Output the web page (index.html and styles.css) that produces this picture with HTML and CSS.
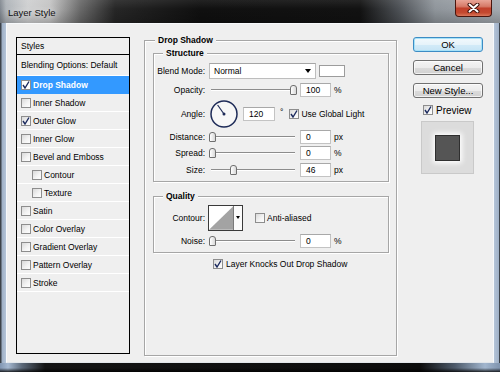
FILE: index.html
```html
<!DOCTYPE html>
<html>
<head>
  <meta charset="utf-8">
  <link rel="stylesheet" href="styles.css">
</head>
<body>
  <div class="window">
    <div class="titlebar">
      <div class="title">Layer Style</div>
      <div class="close-btn">
        <svg width="13" height="10" viewBox="0 0 13 10">
          <path d="M2.5 1.5 L10.5 8.5 M10.5 1.5 L2.5 8.5" stroke="#3d100a" stroke-width="4" stroke-linecap="round"/>
          <path d="M2.5 1.5 L10.5 8.5 M10.5 1.5 L2.5 8.5" stroke="#ffffff" stroke-width="2" stroke-linecap="round"/>
        </svg>
      </div>
    </div>

    <div class="frame">
      <div class="client">

        <!-- styles list -->
        <div class="style-list">
          <div class="list-head">Styles</div>
          <div class="list-blend">Blending Options: Default</div>
          <div class="list-item selected">
            <span class="checkbox"><svg width="8" height="8" viewBox="0 0 8 8"><path d="M1 4 L3 7 L7 0.5" fill="none" stroke="#1b2a5e" stroke-width="1.4"/></svg></span>Drop Shadow
          </div>
          <div class="list-item"><span class="checkbox"></span>Inner Shadow</div>
          <div class="list-item">
            <span class="checkbox"><svg width="8" height="8" viewBox="0 0 8 8"><path d="M1 4 L3 7 L7 0.5" fill="none" stroke="#1b2a5e" stroke-width="1.4"/></svg></span>Outer Glow
          </div>
          <div class="list-item"><span class="checkbox"></span>Inner Glow</div>
          <div class="list-item"><span class="checkbox"></span>Bevel and Emboss</div>
          <div class="list-item indent"><span class="checkbox"></span>Contour</div>
          <div class="list-item indent"><span class="checkbox"></span>Texture</div>
          <div class="list-item"><span class="checkbox"></span>Satin</div>
          <div class="list-item"><span class="checkbox"></span>Color Overlay</div>
          <div class="list-item"><span class="checkbox"></span>Gradient Overlay</div>
          <div class="list-item"><span class="checkbox"></span>Pattern Overlay</div>
          <div class="list-item"><span class="checkbox"></span>Stroke</div>
        </div>

        <!-- drop shadow settings -->
        <div class="section">
          <div class="group-title">Drop Shadow</div>

          <div class="group structure">
            <div class="group-title">Structure</div>

            <div class="row row-blend">
              <div class="label">Blend Mode:</div>
              <div class="select">Normal<span class="arrow"></span></div>
              <div class="swatch"></div>
            </div>

            <div class="row row-slider row-opacity">
              <div class="label">Opacity:</div>
              <div class="slider"><div class="thumb" style="left: 81px"></div></div>
              <div class="num">100</div>
              <div class="unit">%</div>
            </div>

            <div class="row row-angle">
              <div class="label">Angle:</div>
              <svg class="dial" width="28" height="28" viewBox="0 0 28 28">
                <circle cx="14" cy="14" r="13" fill="#f7f7f7" stroke="#1e2b58" stroke-width="1.5"/>
                <line x1="14" y1="14" x2="7.6" y2="5" stroke="#1e2b58" stroke-width="1.2"/>
                <circle cx="14" cy="14" r="1.5" fill="#1e2b58"/>
              </svg>
              <div class="num angle-num">120</div>
              <div class="degree">°</div>
              <span class="checkbox global-check"><svg width="8" height="8" viewBox="0 0 8 8"><path d="M1 4 L3 7 L7 0.5" fill="none" stroke="#1b2a5e" stroke-width="1.4"/></svg></span>
              <div class="check-text">Use Global Light</div>
            </div>

            <div class="row row-slider row-distance">
              <div class="label">Distance:</div>
              <div class="slider"><div class="thumb" style="left: 0px"></div></div>
              <div class="num">0</div>
              <div class="unit">px</div>
            </div>

            <div class="row row-slider row-spread">
              <div class="label">Spread:</div>
              <div class="slider"><div class="thumb" style="left: 0px"></div></div>
              <div class="num">0</div>
              <div class="unit">%</div>
            </div>

            <div class="row row-slider row-size">
              <div class="label">Size:</div>
              <div class="slider"><div class="thumb" style="left: 21px"></div></div>
              <div class="num">46</div>
              <div class="unit">px</div>
            </div>
          </div>

          <div class="group quality">
            <div class="group-title">Quality</div>

            <div class="row row-contour">
              <div class="label">Contour:</div>
              <div class="contour">
                <svg class="curve" width="25" height="24" viewBox="0 0 25 24">
                  <rect width="25" height="24" fill="#ffffff"/>
                  <polygon points="0,24 25,0 25,24" fill="#a3a3a3"/>
                </svg>
                <div class="contour-drop"><span class="arrow"></span></div>
              </div>
              <span class="checkbox anti-check"></span>
              <div class="check-text">Anti-aliased</div>
            </div>

            <div class="row row-slider row-noise">
              <div class="label">Noise:</div>
              <div class="slider"><div class="thumb" style="left: 0px"></div></div>
              <div class="num">0</div>
              <div class="unit">%</div>
            </div>
          </div>

          <div class="knock-row">
            <span class="checkbox"><svg width="8" height="8" viewBox="0 0 8 8"><path d="M1 4 L3 7 L7 0.5" fill="none" stroke="#1b2a5e" stroke-width="1.4"/></svg></span>
            <div class="check-text">Layer Knocks Out Drop Shadow</div>
          </div>
        </div>

        <!-- buttons -->
        <div class="actions">
          <div class="btn btn-default">OK</div>
          <div class="btn">Cancel</div>
          <div class="btn">New Style...</div>
          <div class="preview-row">
            <span class="checkbox"><svg width="8" height="8" viewBox="0 0 8 8"><path d="M1 4 L3 7 L7 0.5" fill="none" stroke="#1b2a5e" stroke-width="1.4"/></svg></span>
            <div class="preview-text">Preview</div>
          </div>
          <div class="preview-box">
            <div class="preview-square"></div>
          </div>
        </div>

      </div>
    </div>
    <div class="bottom-edge"></div>
  </div>
</body>
</html>
```

FILE: styles.css
```css
* {
  margin: 0;
  padding: 0;
  box-sizing: border-box;
}

body {
  width: 500px;
  height: 372px;
  overflow: hidden;
  font-family: "Liberation Sans", Arial, sans-serif;
  font-size: 8.5px;
  color: #000;
  background: #111;
}

.window {
  width: 500px;
  height: 372px;
  display: flex;
  flex-direction: column;
}

/* title bar */

.titlebar {
  height: 23px;
  display: flex;
  align-items: flex-start;
  background:
    linear-gradient(180deg, rgba(255,255,255,0.08) 0, rgba(0,0,0,0) 40%, rgba(0,0,0,0.18) 100%),
    linear-gradient(90deg, #80878f 0, #aeb3b8 6px, #cfd0d1 28px, #c4c4c4 50px, #6a6a6a 80px, #262626 115px, #101010 200px, #121212 360px, #4e5257 400px, #8f959b 435px, #a4aab0 500px);
}

.title {
  padding: 7px 0 0 8px;
  font-size: 9.5px;
  line-height: 12px;
  color: #111;
  text-shadow: 0 0 6px rgba(255,255,255,0.9);
}

.close-btn {
  margin-left: auto;
  margin-right: 8px;
  width: 37px;
  height: 17px;
  display: flex;
  align-items: center;
  justify-content: center;
  border: 1px solid #4a150d;
  border-top: none;
  border-radius: 0 0 4px 4px;
  background: linear-gradient(180deg, #e9a597 0, #d67a68 40%, #c1402b 52%, #c4492f 80%, #d9765a 100%);
}

/* frame */

.frame {
  height: 340px;
  padding: 0 6px;
  background: linear-gradient(90deg, #3d434a 0, #3d434a 1px, #9fb0c6 2px, #b4c4d8 6px, #b4c4d8 494px, #9fb0c6 499px, #3d434a 499px);
}

.client {
  height: 340px;
  display: flex;
  align-items: flex-start;
  background: #efefef;
  border: 1px solid #f7f9fb;
  border-bottom-color: #e2e6ea;
}

.bottom-edge {
  height: 9px;
  background:
    linear-gradient(180deg, rgba(0,0,0,0) 0, rgba(0,0,0,0) 55%, rgba(0,0,0,0.8) 100%),
    linear-gradient(90deg, #8196b2 0, #a5b8d0 8px, #5b6878 22px, #141414 45px, #0c0c0c 420px, #4d5a6a 455px, #a2b6ce 485px, #7f93ad 500px);
}

/* styles list */

.style-list {
  margin: 13px 0 0 9px;
  width: 114px;
  height: 317px;
  border: 1px solid #000;
  background: #efefef;
}

.list-head {
  height: 17px;
  line-height: 16px;
  padding-left: 4px;
  border-bottom: 1px solid #000;
}

.list-blend {
  height: 21px;
  line-height: 20px;
  padding-left: 4px;
  border-bottom: 1px solid #fff;
}

.list-item {
  height: 18px;
  display: flex;
  align-items: center;
  padding-left: 4px;
  border-bottom: 1px solid #fff;
}

.list-item .checkbox {
  margin-right: 2px;
}

.list-item.indent {
  padding-left: 15px;
}

.list-item.selected {
  background: #3399ff;
  border-bottom-color: #3399ff;
  color: #fff;
  font-weight: bold;
}

.list-item.selected .checkbox {
  background: #fff;
}

/* checkboxes */

.checkbox {
  flex: 0 0 10px;
  width: 10px;
  height: 10px;
  display: inline-flex;
  align-items: center;
  justify-content: center;
  border: 1px solid #8d8d8d;
  background: linear-gradient(135deg, #d9d9d9 0, #f4f4f4 60%, #fdfdfd 100%);
}

.check-text {
  margin-left: 2px;
  white-space: nowrap;
}

/* drop shadow section */

.section {
  margin: 16px 0 0 14px;
  width: 253px;
  height: 316px;
  border: 1px solid #a6a6a6;
  box-shadow: 1px 1px 0 #fff, inset 1px 1px 0 #fff;
}

.group-title {
  width: fit-content;
  height: 12px;
  margin: -7px 0 0 10px;
  padding: 0 3px;
  line-height: 12px;
  font-weight: bold;
  background: #efefef;
}

.group {
  margin: 7px 0 0 8px;
  width: 236px;
  border: 1px solid #a6a6a6;
  box-shadow: 1px 1px 0 #fff, inset 1px 1px 0 #fff;
}

.group .group-title {
  margin-left: 9px;
}

.structure {
  padding-bottom: 4px;
}

.quality {
  margin-top: 14px;
  padding-bottom: 4px;
}

.row {
  display: flex;
  align-items: center;
}

.label {
  flex: 0 0 51px;
  margin-right: 4px;
  text-align: right;
  white-space: nowrap;
}

.row-blend {
  height: 16px;
  margin-top: 4px;
}

.select {
  width: 107px;
  height: 16px;
  display: flex;
  align-items: center;
  justify-content: space-between;
  padding: 0 4px 0 4px;
  background: #fff;
  border: 1px solid #bdbdbd;
  border-top-color: #a5a5a5;
}

.arrow {
  width: 0;
  height: 0;
  border-left: 3.5px solid transparent;
  border-right: 3.5px solid transparent;
  border-top: 4px solid #000;
}

.swatch {
  width: 26px;
  height: 12px;
  margin-left: 3px;
  background: #fff;
  border: 1px solid #9c9c9c;
}

.row-slider {
  height: 14px;
  margin-top: 2px;
}

.row-opacity {
  margin-top: 4px;
}

.row-size {
  margin-top: 3px;
}

.slider {
  position: relative;
  width: 88px;
  height: 14px;
}

.slider::before {
  content: '';
  position: absolute;
  left: 2px;
  right: 2px;
  top: 6px;
  border-top: 1px solid #8c8c8c;
  border-bottom: 1px solid #fff;
}

.thumb {
  position: absolute;
  top: 2px;
  width: 7px;
  height: 10px;
  border: 1px solid #6f6f6f;
  border-radius: 3px 3px 1px 1px;
  background: linear-gradient(90deg, #fff, #d8d8d8);
}

.num {
  width: 31px;
  height: 14px;
  margin-left: 3px;
  padding-left: 5px;
  line-height: 12px;
  background: #fff;
  border: 1px solid #c3c3c3;
  border-top-color: #a8a8a8;
}

.unit {
  margin-left: 3px;
}

.row-angle {
  height: 28px;
  margin-top: 3px;
}

.dial {
  margin-left: 1px;
}

.num.angle-num {
  width: 32px;
  margin-left: 5px;
}

.degree {
  align-self: flex-start;
  margin: 7px 0 0 5px;
}

.global-check {
  margin-left: 6px;
}

.row-contour {
  height: 26px;
  margin-top: 3px;
}

.contour {
  width: 35px;
  height: 26px;
  margin-left: -1px;
  display: flex;
  border: 1px solid #3a3a3a;
  background: #fff;
}

.contour-drop {
  width: 9px;
  display: flex;
  justify-content: center;
  padding-top: 10px;
  border-left: 1px solid #7a7a7a;
  background: #fbfbfb;
}

.contour-drop .arrow {
  border-left-width: 2.5px;
  border-right-width: 2.5px;
  border-top-width: 3px;
}

.anti-check {
  margin-left: 12px;
}

.row-noise {
  margin-top: 3px;
}

.knock-row {
  display: flex;
  align-items: center;
  height: 12px;
  margin: 5px 0 0 68px;
}

.knock-row .check-text {
  margin-left: 3px;
}

/* buttons column */

.actions {
  margin: 13px 0 0 16px;
  width: 70px;
  display: flex;
  flex-direction: column;
}

.btn {
  height: 15px;
  margin-bottom: 8px;
  line-height: 13px;
  text-align: center;
  font-size: 9.5px;
  border: 1px solid #707070;
  border-radius: 3px;
  background: linear-gradient(180deg, #f4f4f4 0, #ececec 50%, #dcdcdc 51%, #d0d0d0 100%);
  box-shadow: inset 0 0 0 1px rgba(255,255,255,0.7);
}

.btn-default {
  border-color: #3c8cc4;
  box-shadow: inset 0 0 0 1px #a6e2f8;
  background: linear-gradient(180deg, #f2f9fd 0, #e6f3fa 50%, #d3ebf8 51%, #c6e4f5 100%);
}

.preview-row {
  display: flex;
  align-items: center;
  height: 12px;
  margin: -2px 0 0 10px;
}

.preview-text {
  margin-left: 3px;
  font-size: 10px;
}

.preview-box {
  width: 53px;
  height: 53px;
  margin: 5px 0 0 8px;
  display: flex;
  align-items: center;
  justify-content: center;
  background: #dcdcdc;
  border: 1px solid #c9c9c9;
}

.preview-square {
  width: 25px;
  height: 26px;
  background: #555;
  border: 1px solid #2f2f2f;
  box-shadow: 0 0 5px 2px #fff;
}
```
